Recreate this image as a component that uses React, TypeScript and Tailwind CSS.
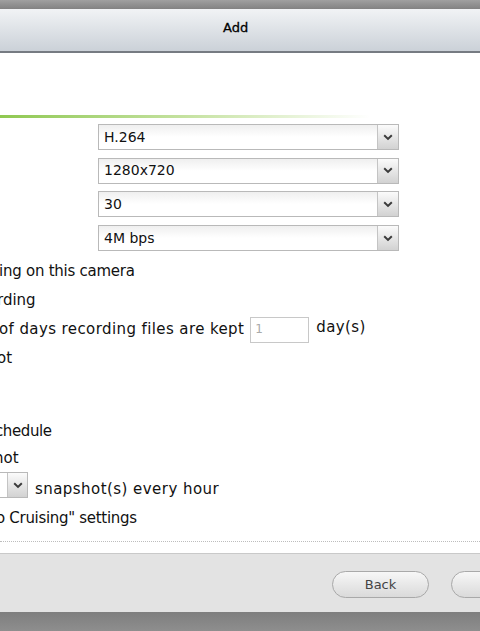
import React from "react";

const Chevron = () => (
  <svg width="10" height="7" viewBox="0 0 10 7">
    <path d="M1.2 1.3 L5 4.9 L8.8 1.3" fill="none" stroke="#3a3a3a" strokeWidth="2" />
  </svg>
);

const Select = ({ value }: { value: string }) => (
  <div className="flex h-[26px] w-[301px] border border-[#b9b9b9] bg-gradient-to-b from-[#efefef] via-white to-white">
    <div className="flex flex-1 items-center pl-[5px] text-[14px] text-[#111]">{value}</div>
    <div className="flex w-[21px] items-center justify-center border-l border-[#c4c4c4] bg-gradient-to-b from-[#fbfbfb] to-[#d2d2d2]">
      <Chevron />
    </div>
  </div>
);

export default function App() {
  return (
    <div
      className="flex h-[631px] w-[480px] flex-col overflow-hidden bg-white text-[#111]"
      style={{ fontFamily: '"DejaVu Sans", Verdana, sans-serif' }}
    >
      <div className="h-[9px] shrink-0 bg-gradient-to-b from-[#a0a0a0] to-[#828282]" />
      <div className="flex h-[44px] shrink-0 items-center border-b-2 border-[#767b82] bg-gradient-to-b from-[#f1f3f5] to-[#cbd1d8] pb-[4px] pl-[223px] text-[13px] text-black [-webkit-text-stroke:0.3px_#000]">
        Add
      </div>
      <div className="flex min-h-0 flex-1 flex-col">
        <div className="mt-[62px] h-[3px] w-[370px] shrink-0 bg-gradient-to-r from-[#8fc850] via-[#c5e2a0] to-transparent" />
        <div className="ml-[98px] mt-[6px] flex flex-col gap-[7.7px]">
          <Select value="H.264" />
          <Select value="1280x720" />
          <Select value="30" />
          <Select value="4M bps" />
        </div>
        <div className="mt-[6px] flex flex-col text-[15px] leading-[29px]">
          <div className="ml-[-1px] tracking-[-0.25px]">ing on this camera</div>
          <div className="ml-[-3px]">rding</div>
          <div className="flex items-center tracking-[0.4px]">
            <span className="ml-[-1px]">of days recording files are kept</span>
            <div className="ml-[6px] flex h-[26px] w-[59px] items-center border border-[#c8c8c8] pl-[4px] text-[12px] text-[#aaa]">
              1
            </div>
            <span className="ml-[7px] -translate-y-[2px]">day(s)</span>
          </div>
          <div className="ml-[-3px]">ot</div>
          <div className="mt-[44px] ml-[-5px] tracking-[-0.4px] leading-[28px]">chedule</div>
          <div className="ml-[-6px] leading-[27px]">hot</div>
          <div className="flex items-start">
            <div className="flex h-[26px] w-[28px] border border-l-0 border-[#b9b9b9] bg-white">
              <div className="w-[7px]" />
              <div className="flex flex-1 items-center justify-center border-l border-[#c4c4c4] bg-gradient-to-b from-[#fbfbfb] to-[#d2d2d2]">
                <Chevron />
              </div>
            </div>
            <span className="ml-[7px] mt-[3px] tracking-[0.45px]">snapshot(s) every hour</span>
          </div>
          <div className="ml-[-4px] tracking-[-0.3px]">o Cruising" settings</div>
        </div>
        <div className="mt-[8px] border-t border-dotted border-[#bdbdbd]" />
      </div>
      <div className="flex h-[59px] shrink-0 items-center gap-[22px] border-t border-[#c9c9c9] bg-[#e3e3e3] pl-[332px] pt-[3px]">
        <div className="flex h-[27px] w-[97px] shrink-0 items-center justify-center rounded-full border border-[#a9a9a9] bg-gradient-to-b from-[#f7f7f7] to-[#dadada] text-[13px] text-[#444]">
          Back
        </div>
        <div className="h-[27px] w-[97px] shrink-0 rounded-full border border-[#a9a9a9] bg-gradient-to-b from-[#f7f7f7] to-[#dadada]" />
      </div>
      <div className="h-[19px] shrink-0 bg-gradient-to-b from-[#7e7e7e] to-[#8e8e8e]" />
    </div>
  );
}
